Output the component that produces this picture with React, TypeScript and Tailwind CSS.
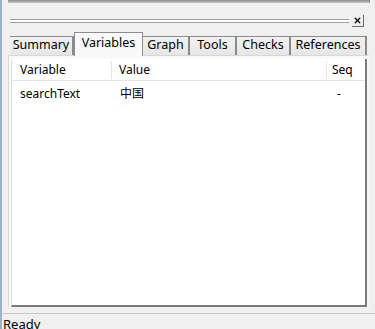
import { X } from 'lucide-react';

const tabs = [
  { label: 'Summary', w: 64 },
  { label: 'Variables', w: 69, active: true },
  { label: 'Graph', w: 47 },
  { label: 'Tools', w: 47 },
  { label: 'Checks', w: 54 },
  { label: 'References', w: 76 },
];

const rows = [{ name: 'searchText', value: '中国', seq: '-' }];

export default function App() {
  return (
    <div
      className="flex h-[329px] w-[375px] overflow-hidden bg-[#f0f0f0] text-[12px] text-black"
      style={{ fontFamily: '"Noto Sans", "Noto Sans CJK SC", sans-serif' }}
    >
      {/* window frame edge */}
      <div className="w-[2px] shrink-0 bg-[#9fb1c8]" />

      <div className="flex min-w-0 flex-1 flex-col">
        {/* bottom edge of the pane above */}
        <div className="ml-[6px] mr-[5px] h-[3px] shrink-0 border-r border-[#8a8a8a] bg-gradient-to-b from-[#8c8c8c] to-[#c8c8c8]" />

        {/* grip + close */}
        <div className="mt-[12px] flex h-[12px] shrink-0 items-center pl-[8px] pr-[11px]">
          <div className="h-[4px] flex-1 border-y border-[#a0a0a0] bg-white" />
          <div className="ml-[3px] flex h-[12px] w-[12px] items-center justify-center border-r border-b border-[#6a6a6a] bg-[#f0f0f0]">
            <X size={9} strokeWidth={3.5} />
          </div>
        </div>

        {/* tab strip */}
        <div className="mt-[4px] flex h-[24px] shrink-0 items-end pl-[8px]">
          {tabs.map((t) =>
            t.active ? (
              <div
                key={t.label}
                className="relative z-10 -mb-px flex h-[24px] shrink-0 items-start justify-center border-x border-t border-[#898c95] bg-[#f9f9f9] pt-[1px] text-[12.5px]"
                style={{ width: t.w }}
              >
                {t.label}
              </div>
            ) : (
              <div
                key={t.label}
                className="flex h-[19px] shrink-0 items-center justify-center border-t border-r-2 border-[#898c95] border-r-[#8a8a8a] bg-gradient-to-b from-[#f2f2f2] to-[#e6e6e6] pb-[1px] text-[12.5px]"
                style={{ width: t.w }}
              >
                {t.label}
              </div>
            )
          )}
        </div>

        {/* tab page */}
        <div className="mr-[6px] ml-[6px] flex h-[252px] shrink-0 flex-col border-t border-l border-[#d8d8d8] bg-[#f9f9f9] px-[2px] pt-[3px]">
          <div className="flex flex-1 flex-col border-l border-[#dcdcdc] border-r-2 border-b-2 border-r-[#7a7a7a] border-b-[#7a7a7a] bg-white">
            <div className="flex h-[22px] shrink-0 items-center border-b border-[#e5e5e5]">
              <div className="w-[100px] border-r border-[#e5e5e5] pl-[8px]">Variable</div>
              <div className="flex-1 border-r border-[#e5e5e5] pl-[7px]">Value</div>
              <div className="w-[38px] pl-[5px]">Seq</div>
            </div>
            {rows.map((r) => (
              <div key={r.name} className="flex h-[26px] items-center">
                <div className="w-[100px] pl-[8px]">{r.name}</div>
                <div className="flex-1 pl-[8px]">{r.value}</div>
                <div className="w-[38px] pl-[10px]">{r.seq}</div>
              </div>
            ))}
          </div>
        </div>

        {/* status bar */}
        <div className="mt-[6px] h-px shrink-0 bg-[#c9c9c9]" />
        <div className="flex-1 pl-[1px] pt-[2px] text-[13px] leading-[16px]">Ready</div>
      </div>
    </div>
  );
}
